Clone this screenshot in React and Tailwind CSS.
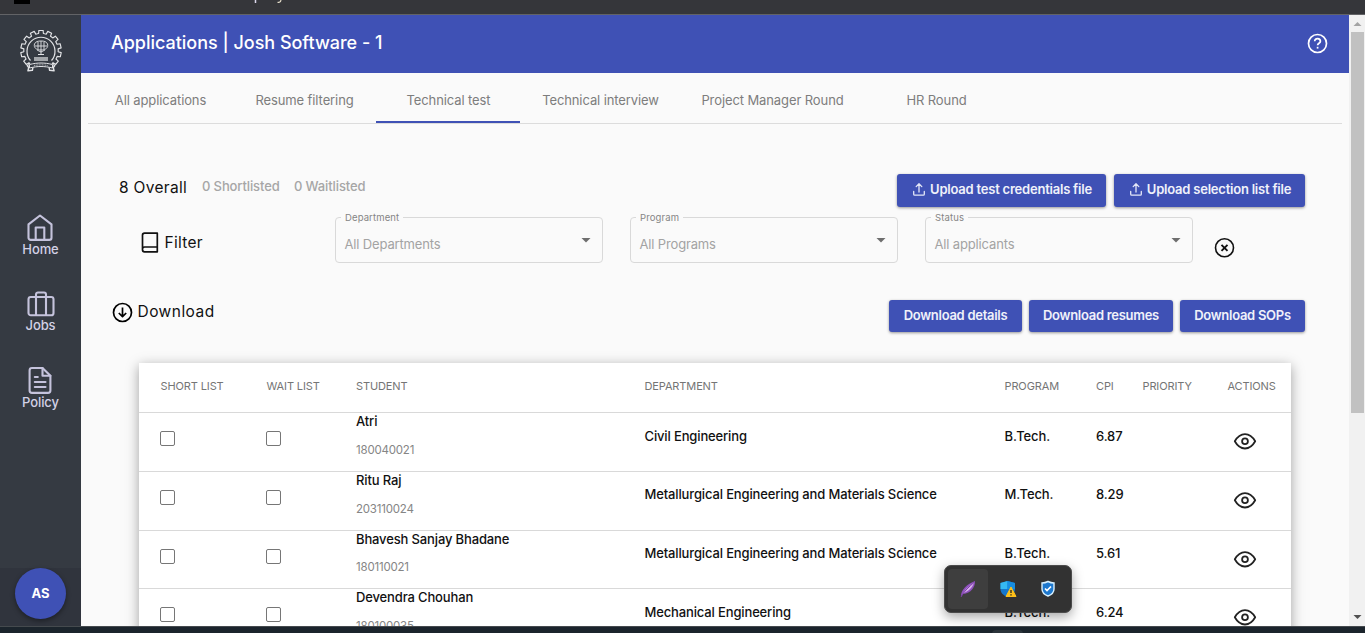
import React from "react";

const tabs = [
  ["All applications", "w-[144px]"],
  ["Resume filtering", "w-[144px]"],
  ["Technical test", "w-[144px]"],
  ["Technical interview", "w-[160px]"],
  ["Project Manager Round", "w-[184px]"],
  ["HR Round", "w-[144px]"],
];

const students = [
  ["Atri", "180040021", "Civil Engineering", "B.Tech.", "6.87", "h-[59px]", "pt-[15px]", "mt-[13px]", "mt-[18px]"],
  ["Ritu Raj", "203110024", "Metallurgical Engineering and Materials Science", "M.Tech.", "8.29", "h-[59px]", "pt-[14px]", "mt-[13px]", "mt-[18px]"],
  ["Bhavesh Sanjay Bhadane", "180110021", "Metallurgical Engineering and Materials Science", "B.Tech.", "5.61", "h-[58px]", "pt-[14px]", "mt-[12px]", "mt-[18px]"],
  ["Devendra Chouhan", "180100035", "Mechanical Engineering", "B.Tech.", "6.24", "h-[59px]", "pt-[15px]", "mt-[13px]", "mt-[18px]"],
];

const columns = "grid grid-cols-[106px_90px_288px_360px_92px_46px_85px_64px] pl-[21px]";

function Crest() {
  const teeth = [];
  for (let i = 0; i < 11; i++) {
    const mid = -90 + (i - 5) * 25.5;
    const point = (r, offset) => {
      const a = ((mid + offset) * Math.PI) / 180;
      return `${(21 + r * Math.cos(a)).toFixed(2)},${(20.5 + r * Math.sin(a)).toFixed(2)}`;
    };
    teeth.push(point(17.2, -12.7), point(17.2, -8), point(20.3, -6), point(20.3, 6), point(17.2, 8), point(17.2, 12.7));
  }
  return (
    <svg width="44" height="44" viewBox="0 0 44 44" fill="none" stroke="#e2e3e6" strokeLinejoin="round">
      <polyline points={teeth.join(" ")} strokeWidth="1.15" />
      <path d="M10.500 30.500A14 14 0 1 1 31.500 30.500" strokeWidth="1.200" />
      <path d="M14.500 14c-1 3.500 1.500 6 6.500 6s7.500-2.500 6.500-6c-1-2.500-3.500-3-6.500-3s-5.500.5-6.500 3Z" strokeWidth=".9" />
      <path d="M21 11v14M18 12v7M24 12v7M15 16h12M17 20l4 2 4-2" strokeWidth=".9" />
      <path d="M18 24.500h6" strokeWidth="1" />
      <path d="M14 28h14M14 30h14" strokeWidth="1.300" opacity=".85" />
      <path d="M9.500 34.500c8-2 15-2 23 0v3.500c-8-2-15-2-23 0Z" strokeWidth="1" />
      <path d="M9 34.500l-1.800 1 1.500 2-.8 3.300 4.500-.5.500-3M33 34.500l1.800 1-1.500 2 .8 3.300-4.500-.5-.5-3" strokeWidth="1.400" />
      <path d="M14 35.600c5-1 9-1 14 0" strokeWidth="1.200" strokeDasharray="1 .6" opacity=".6" />
    </svg>
  );
}

function HomeIcon() {
  return (
    <svg width="28" height="28" viewBox="0 0 28 28" fill="none" stroke="#c5c3dc" strokeWidth="2.100" strokeLinejoin="round">
      <path d="M2.500 11.400 14 2.500l11.500 8.900v13.300a2.200 2.200 0 0 1-2.200 2.200H4.700a2.200 2.200 0 0 1-2.200-2.200Z" />
      <path d="M9.700 27V14.500h8.600V27" />
    </svg>
  );
}

function JobsIcon() {
  return (
    <svg width="28" height="26" viewBox="0 0 28 26" fill="none" stroke="#c5c3dc" strokeWidth="2.100" strokeLinejoin="round">
      <rect x="1.500" y="6" width="25" height="18.300" rx="2.300" />
      <path d="M9 24V3.500A2 2 0 0 1 11 1.500h6a2 2 0 0 1 2 2V24" />
    </svg>
  );
}

function PolicyIcon() {
  return (
    <svg width="24" height="28" viewBox="0 0 24 28" fill="none" stroke="#c5c3dc" strokeWidth="2.100" strokeLinejoin="round" strokeLinecap="round">
      <path d="M14.500 2H4A2.400 2.400 0 0 0 1.600 4.400V24.500A2.400 2.400 0 0 0 4 26.900h16A2.400 2.400 0 0 0 22.400 24.500V9.800Z" />
      <path d="M14.500 2v7.800h7.900M6.800 11h3M6.800 16h10.700M6.800 21h10.700" />
    </svg>
  );
}

function NavItem({ label, children, className }) {
  return (
    <a className={`flex flex-col items-center text-[13px] font-medium leading-4 tracking-[-0.1px] text-[#d3d1e6] ${className}`}>
      {children}
      <span>{label}</span>
    </a>
  );
}

function UploadButton({ children, className }) {
  return (
    <button className={`flex h-[33px] items-center justify-center gap-[5px] whitespace-nowrap rounded-[3px] bg-[#3f51b5] pb-[2px] pl-[2px] text-[13px] font-semibold tracking-[-0.22px] text-[#f0f1fa] shadow-[0_1px_3px_rgba(0,0,0,0.4)] ${className}`}>
      <svg width="12" height="13" viewBox="0 0 12 13" fill="none" stroke="#e4e7f7" strokeWidth="1.300" strokeLinecap="round" strokeLinejoin="round">
        <path d="M6 9V1M3.200 3.600 6 .8l2.800 2.800M.7 8.500v2.700c0 .6.4 1 1 1h8.600c.6 0 1-.4 1-1V8.500" />
      </svg>
      {children}
    </button>
  );
}

function Button({ children, className }) {
  return (
    <button className={`flex h-8 items-center justify-center whitespace-nowrap rounded-[3px] bg-[#3f51b5] pb-px text-[13px] font-semibold tracking-[-0.28px] text-[#f0f1fa] shadow-[0_1px_3px_rgba(0,0,0,0.4)] ${className}`}>
      {children}
    </button>
  );
}

function Select({ label, value, className }) {
  return (
    <fieldset className={`h-[51px] w-[268px] shrink-0 rounded-[4px] border border-[#d9d9d9] px-[5px] ${className}`}>
      <legend className="h-[10px] px-1 text-[9.500px] leading-[12px] tracking-[0.12px] text-[#858585]">{label}</legend>
      <div className="flex h-[40px] items-center justify-between pl-[3.500px] pr-[6px]">
        <span className="pt-[5px] text-[13px] tracking-[-0.15px] text-[#a3a3a3]">{value}</span>
        <svg width="10" height="5" viewBox="0 0 10 5" className="mb-[3px]"><path d="M0.500 0h9L5 4.500Z" fill="#6e6e6e" /></svg>
      </div>
    </fieldset>
  );
}

function EyeIcon() {
  return (
    <svg width="24" height="18" viewBox="0 0 24 18" fill="none" stroke="#222" strokeWidth="1.800" strokeLinejoin="round">
      <path d="M1.800 9.300C4.500 4.500 8 2.100 12 2.100S19.500 4.500 22.200 9.300C19.500 14.100 16 16.500 12 16.500S4.500 14.100 1.800 9.300Z" />
      <circle cx="12" cy="9.300" r="2.900" />
    </svg>
  );
}

function Checkbox({ className }) {
  return <span className={`block h-[15px] w-[15px] rounded-[2px] border border-[#767676] bg-white ${className}`} />;
}

export default function App() {
  return (
    <div className="relative flex h-[633px] w-[1365px] flex-col overflow-hidden bg-[#fafafa] font-['Inter',sans-serif]">
      <div className="h-[15px] shrink-0 border-b border-[#626366] bg-[#35363a]">
        <svg width="300" height="5" viewBox="0 0 300 5" className="block">
          <path d="M14 0h16v4H14Z" fill="#000" />
          <path d="M255.500 0v3" stroke="#ded9ee" strokeWidth="1.500" />
          <path d="M281 0c-.5 2-1.500 2.800-3.500 2.200" fill="none" stroke="#e5deca" strokeWidth="1.200" />
        </svg>
      </div>

      <div className="flex h-[611px] shrink-0 overflow-hidden">
        <aside className="flex w-[81px] shrink-0 flex-col items-center bg-[#353a42]">
          <div className="ml-[2px] mt-[15px] h-11"><Crest /></div>
          <NavItem label="Home" className="mt-[139px]"><HomeIcon /></NavItem>
          <NavItem label="Jobs" className="mt-[34px]"><JobsIcon /></NavItem>
          <NavItem label="Policy" className="mt-[33px]"><PolicyIcon /></NavItem>
          <div className="mt-auto flex h-[58px] w-[81px] shrink-0 justify-center bg-[#30343d]">
            <div className="flex h-[51px] w-[51px] items-center justify-center rounded-full bg-[#3f51b5] text-[13px] font-bold text-white shadow-[0_2px_5px_rgba(0,0,0,0.4)]">AS</div>
          </div>
        </aside>

        <main className="w-[1268px] shrink-0">
          <header className="flex h-[58px] items-center justify-between bg-[#3f51b5] pl-[30px] pr-[21px]">
            <h1 className="pb-[3px] text-[18px] font-medium tracking-[-0.02px] text-white">Applications | Josh Software - 1</h1>
            <svg width="21" height="21" viewBox="0 0 21 21" fill="none" stroke="#fff" strokeWidth="1.700" className="mb-[2px]">
              <circle cx="10.500" cy="10.500" r="9" />
              <path d="M7.700 8.200c0-3.500 5.700-3.300 5.700 0 0 2-2.800 2-2.800 4.100" />
              <path d="M10.600 13.800v1.800" />
            </svg>
          </header>

          <nav className="ml-[7px] mr-[7px] flex h-[51px] border-b border-[#dcdcdc] text-[13px] tracking-[-0.1px] text-[#7d7d7d]">
            {tabs.map(([label, width]) => (
              <div key={label} className={`flex items-center justify-center border-b-2 pl-px pt-[7px] ${width} ${label === "Technical test" ? "border-[#3f51b5]" : "border-transparent"}`}>{label}</div>
            ))}
          </nav>

          <div className="mt-[50px] flex h-[33px] items-center pl-[38px] pr-[44px]">
            <span className="w-[83px] whitespace-nowrap pb-[5px] text-[15.500px] tracking-[0.32px] text-[#111]">8 Overall</span>
            <span className="w-[92px] pb-[8px] text-[13px] font-medium tracking-[-0.12px] text-[#a6a6a6]">0 Shortlisted</span>
            <span className="pb-[8px] text-[13px] font-medium tracking-[-0.12px] text-[#a6a6a6]">0 Waitlisted</span>
            <div className="ml-auto flex gap-2">
              <UploadButton className="w-[209px]">Upload test credentials file</UploadButton>
              <UploadButton className="w-[191px]">Upload selection list file</UploadButton>
            </div>
          </div>

          <div className="flex h-[58px] items-start pl-[60px] pt-[5px]">
            <div className="flex w-[194px] items-center pt-[19px]">
              <svg width="18" height="22" viewBox="0 0 18 22" fill="none" stroke="#111" strokeWidth="1.700" strokeLinejoin="round" className="mt-px">
                <path d="M16.300 1.200H3.500a2 2 0 0 0-2 2v14.600a2 2 0 0 0 2 2h12.800ZM1.500 17a2 2 0 0 1 2-2h12.800" />
              </svg>
              <span className="ml-[5.500px] text-[15.500px] leading-[22px] tracking-[0.3px] text-[#111]">Filter</span>
            </div>
            <Select label="Department" value="All Departments" />
            <Select label="Program" value="All Programs" className="ml-[27px]" />
            <Select label="Status" value="All applicants" className="ml-[27px]" />
            <svg width="21" height="21" viewBox="0 0 21 21" fill="none" stroke="#111" strokeWidth="1.600" className="ml-[21px] mt-[25px]">
              <circle cx="10.500" cy="10.800" r="9" /><path d="m7.500 7.800 6 6m0-6-6 6" strokeWidth="1.900" />
            </svg>
          </div>

          <div className="mt-[35px] flex h-8 items-center pl-[31px] pr-[44px]">
            <svg width="21" height="21" viewBox="0 0 21 21" fill="none" stroke="#000" strokeWidth="1.700" strokeLinejoin="round" className="mb-[8px]">
              <circle cx="10.500" cy="10.500" r="9" /><path d="M10.500 5.500v9M6.800 11l3.700 3.700 3.700-3.700" />
            </svg>
            <span className="ml-[4.500px] pb-[9px] text-[15.500px] tracking-[0.46px] text-[#111]">Download</span>
            <div className="ml-auto flex gap-[7px]">
              <Button className="w-[133px]">Download details</Button>
              <Button className="w-[144px]">Download resumes</Button>
              <Button className="w-[125px]">Download SOPs</Button>
            </div>
          </div>

          <section className="ml-[58px] mt-[31px] w-[1152px] bg-white shadow-[0_3px_12px_rgba(0,0,0,0.36)]">
            <div className={`${columns} h-[50px] items-center border-b border-[#d9d9d9] pb-[3px] text-[11px] tracking-[-0.12px] text-[#757575]`}>
              <span className="pl-[0.5px]">SHORT LIST</span><span className="pl-[0.5px]">WAIT LIST</span><span>STUDENT</span><span className="pl-[0.5px]">DEPARTMENT</span><span className="pl-[0.5px]">PROGRAM</span><span>CPI</span><span className="pl-[0.5px]">PRIORITY</span><span className="pl-[0.5px]">ACTIONS</span>
            </div>
            {students.map(([name, id, department, program, cpi, height, textTop, idTop, boxTop]) => (
              <div key={id} className={`${columns} ${height} border-b border-[#d9d9d9] text-[13px] font-medium leading-4 tracking-[-0.14px] text-[#111]`}>
                <Checkbox className={boxTop} />
                <Checkbox className={boxTop} />
                <div>
                  <div>{name}</div>
                  <div className={`${idTop} text-[11.500px] font-normal leading-4 tracking-[-0.2px] text-[#858585]`}>{id}</div>
                </div>
                <span className={`pl-[0.5px] ${textTop}`}>{department}</span>
                <span className={`pl-[0.5px] ${textTop}`}>{program}</span>
                <span className={textTop}>{cpi}</span>
                <span />
                <span className="pl-[6px] pt-[19px]"><EyeIcon /></span>
              </div>
            ))}
          </section>
        </main>

        <div className="flex w-4 shrink-0 flex-col items-start bg-[#f1f1f1]">
          <svg width="16" height="17" viewBox="0 0 16 17"><path d="m4.500 11 4-4 4 4Z" fill="#a3a3a3" /></svg>
          <div className="ml-[2px] h-[381px] w-[13px] bg-[#c1c1c1]" />
          <div className="grow" />
          <svg width="16" height="17" viewBox="0 0 16 17"><path d="m4.500 6 4 4 4-4Z" fill="#505050" /></svg>
        </div>
      </div>

      <footer className="flex h-[7px] shrink-0 justify-center border-t border-[#454a4e] bg-[#1b242c]">
        <div className="ml-[650px] mt-[3px] h-1 w-[31px] rounded-t bg-[#2b343b]" />
      </footer>

      <div className="absolute left-[944px] top-[565px] flex h-12 w-32 items-center rounded-[7px] border border-[#4b4b4b] bg-[#323232] pl-[3px] shadow-[0_4px_12px_rgba(0,0,0,0.35)]">
        <div className="flex h-10 w-10 items-center justify-center rounded bg-[#3e3e3e]">
          <svg width="16" height="18" viewBox="0 0 16 18">
            <path d="M1 16.500C1 10 6 4.500 15 1c.3 6-4 12.500-12 13Z" fill="#8e50bd" />
            <path d="M2 15C5 9 9 6 14 2.500 12 8 9 11 3.500 13Z" fill="#dab3ee" />
            <path d="M1 17C4 11 9 7 14.500 2" fill="none" stroke="#7940a3" />
          </svg>
        </div>
        <div className="flex h-10 w-10 items-center justify-center">
          <svg width="18" height="18" viewBox="0 0 18 18">
            <path d="M8.500 1 16 3v6c0 4-3.500 6.500-7.500 8C4.500 15.500 1.500 13 1.500 9V3Z" fill="#1577cc" />
            <path d="M8.500 1v8h-7V3Z" fill="#35b8f1" /><path d="M8.500 1 16 3v6H8.500Z" fill="#168de0" />
            <path d="m12 7 5 9.500H7Z" fill="#fdc01a" stroke="#fdc01a" strokeLinejoin="round" />
            <path d="M12 10v3M12 14.300v1.200" stroke="#222" strokeWidth="1.300" />
          </svg>
        </div>
        <div className="flex h-10 w-10 items-center justify-center">
          <svg width="16" height="18" viewBox="0 0 16 18">
            <path d="M8 1.500c2 1 4 1.500 6 1.500v6c0 3-2 5.500-6 7-4-1.500-6-4-6-7V3c2 0 4-.5 6-1.500Z" fill="#1d78ce" stroke="#d7f0ff" strokeWidth="1.400" />
            <path d="m5 8.500 2 2 4-4" fill="none" stroke="#fff" strokeWidth="1.700" />
          </svg>
        </div>
      </div>
    </div>
  );
}
